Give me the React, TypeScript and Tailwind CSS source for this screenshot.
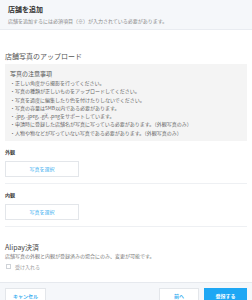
export default function App() {
  const notes = [
    "正しい角度から撮影を行ってください。",
    "写真の種類が正しいものをアップロードしてください。",
    "写真を過度に編集したり色を付けたりしないでください。",
    "写真の容量は5MB以内である必要があります。",
    ".jpg, .jpeg, .gif, .pngをサポートしています。",
    "申請時に登録した店舗名が写真に写っている必要があります。（外観写真のみ）",
    "人物や物などが写っていない写真である必要があります。（外観写真のみ）",
  ];

  return (
    <div
      className="flex h-[300px] w-[252px] flex-col overflow-hidden bg-white text-[#333]"
      style={{ fontFamily: '"Noto Sans CJK JP", "Noto Sans", sans-serif' }}
    >
      {/* Header */}
      <div className="h-[30px] shrink-0 border-b border-[#e9ecf1] bg-[#f5f7fa] px-[8px] pt-[5px]">
        <h1 className="text-[7px] font-bold leading-[9px] text-[#333]">店舗を追加</h1>
        <p className="mt-[3px] text-[5px] leading-[7px] text-[#888]">
          店舗を追加するには必須項目（※）が入力されている必要があります。
        </p>
      </div>

      {/* Body */}
      <div className="flex-1 px-[5px]">
        <h2 className="mt-[22px] text-[7px] leading-[9px] text-[#555]">店舗写真のアップロード</h2>

        <div className="mt-[3px] bg-[#f4f4f4] px-[5px] pb-[4px] pt-[6px]">
          <p className="text-[6px] leading-[8px] text-[#555]">写真の注意事項</p>
          <ul className="mt-[1px] text-[5px] leading-[8.3px] text-[#666]">
            {notes.map((n) => (
              <li key={n} className="whitespace-nowrap">
                ・{n}
              </li>
            ))}
          </ul>
        </div>

        <p className="mt-[7px] text-[5px] font-bold leading-[7px] text-[#444]">外観</p>
        <button className="mt-[6px] flex h-[16px] w-[74px] items-center justify-center border border-[#e3e6ea] bg-white text-[5px] text-[#3aaef0]">
          写真を選択
        </button>
        <div className="mt-[6px] border-t border-[#eef0f3]" />

        <p className="mt-[7px] text-[5px] font-bold leading-[7px] text-[#444]">内観</p>
        <button className="mt-[6px] flex h-[16px] w-[74px] items-center justify-center border border-[#e3e6ea] bg-white text-[5px] text-[#3aaef0]">
          写真を選択
        </button>
        <div className="mt-[6px] border-t border-[#eef0f3]" />

        <p className="mt-[16px] text-[7px] leading-[9px] text-[#444]">Alipay決済</p>
        <p className="text-[5px] leading-[7px] text-[#777]">
          店舗写真の外観と内観が登録済みの場合にのみ、変更が可能です。
        </p>
        <label className="mt-[4px] flex items-center gap-[4px] pl-[1px] text-[5px] leading-[7px] text-[#999]">
          <span className="h-[5px] w-[5px] border border-[#cfd3d8] bg-white" />
          受け入れる
        </label>
      </div>

      {/* Footer */}
      <div className="flex h-[18px] shrink-0 items-start border-t border-[#e6e9ee] bg-[#f5f7fa] px-[5px] pt-[5px]">
        <button className="flex h-[16px] w-[41px] items-center justify-center border border-[#e3e6ea] bg-white text-[5px] font-bold text-[#3aaef0]">
          キャンセル
        </button>
        <div className="ml-auto flex gap-[5px]">
          <button className="flex h-[16px] w-[40px] items-center justify-center border border-[#e3e6ea] bg-white text-[5px] font-bold text-[#3aaef0]">
            前へ
          </button>
          <button className="flex h-[16px] w-[43px] items-center justify-center bg-[#1ea7f4] text-[5px] font-bold text-white">
            登録する
          </button>
        </div>
      </div>
    </div>
  );
}
